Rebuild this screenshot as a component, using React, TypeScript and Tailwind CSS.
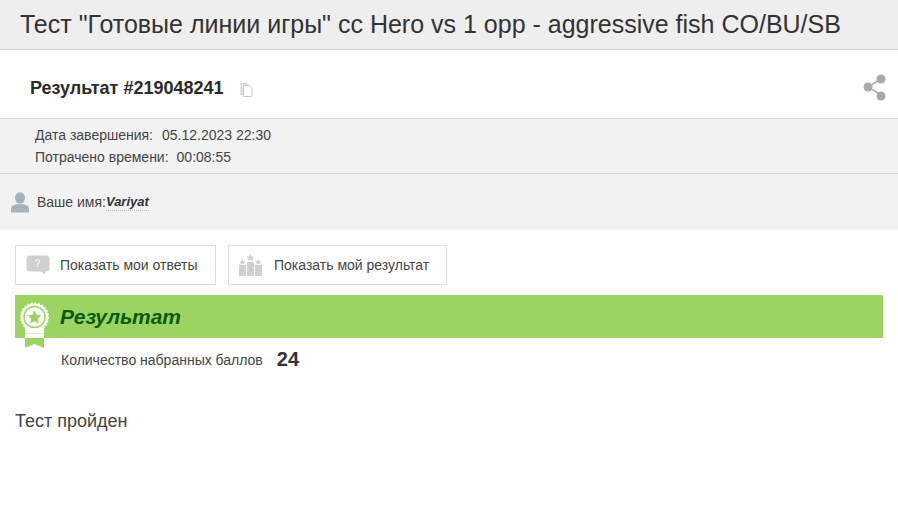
import React from 'react';

const SANS = 'font-["Liberation_Sans",Arial,sans-serif]';

function CopyIcon() {
  return (
    <svg width="13" height="14" viewBox="0 0 13 14" className="block">
      <path d="M1 .5h6l1.500 1.500v.5H4.500v9H1z" fill="#e4e6e8" stroke="#c9ccd0" strokeWidth="1" />
      <path d="M3.500 2.500h5.500l3 3v8h-8.500z" fill="#fff" stroke="#c4c7cb" strokeWidth="1" />
    </svg>
  );
}

function ShareIcon() {
  return (
    <svg width="24" height="28" viewBox="0 0 24 28" className="block">
      <path d="M5 14L18 6M5 14L18 22" stroke="#b0adb0" strokeWidth="1.600" />
      <circle cx="5" cy="14" r="4.500" fill="#aaa8ab" />
      <circle cx="18" cy="6" r="4.500" fill="#aaa8ab" />
      <circle cx="18" cy="23" r="4.500" fill="#aaa8ab" />
    </svg>
  );
}

function UserIcon() {
  return (
    <svg width="18" height="21" viewBox="0 0 18 21" className="block">
      <ellipse cx="9" cy="6" rx="5" ry="5.800" fill="#a3b3bd" />
      <path d="M0 20.500v-4c0-2.500 3-3.800 5.500-4.300h7c2.500.5 5.500 1.800 5.500 4.300v4z" fill="#a3b3bd" />
    </svg>
  );
}

function QuestionIcon() {
  return (
    <svg width="24" height="20" viewBox="0 0 24 20" className="block">
      <path d="M4 .5h16a3.500 3.500 0 0 1 3.500 3.500v9a3.500 3.500 0 0 1-3.500 3.500h-1v3l-4-3H4A3.500 3.500 0 0 1 .5 13V4A3.500 3.500 0 0 1 4 .5z" fill="#cfcfcf" />
      <text x="11.500" y="12" fontSize="10" fontWeight="700" fill="#f2f2f2" textAnchor="middle" fontFamily="Liberation Sans, sans-serif">?</text>
    </svg>
  );
}

function PodiumIcon() {
  return (
    <svg width="24" height="22" viewBox="0 0 24 22" className="block">
      <rect x="0" y="11" width="7" height="11" fill="#cfcfcf" />
      <rect x="8" y="8" width="7" height="14" fill="#cfcfcf" />
      <rect x="16" y="11" width="7" height="11" fill="#cfcfcf" />
      <polygon points="3.500,5 4.500,7.200 6.800,7.400 5,9 5.600,10.800 3.500,9.800 1.400,10.800 2,9 .2,7.400 2.500,7.200" fill="#cfcfcf" />
      <polygon points="11.500,0 12.700,2.600 15.300,2.800 13.300,4.600 14,7 11.500,5.700 9,7 9.700,4.600 7.700,2.800 10.300,2.600" fill="#cfcfcf" />
      <polygon points="19.500,5 20.500,7.200 22.800,7.400 21,9 21.600,10.800 19.500,9.800 17.400,10.800 18,9 16.200,7.400 18.500,7.200" fill="#cfcfcf" />
    </svg>
  );
}

function Badge() {
  return (
    <svg width="32" height="47" viewBox="0 0 32 47" className="block">
      <path d="M6 37h19v10l-9.500-4-9.500 4z" fill="#9cd461" />
      <rect x="6" y="26" width="19" height="11" fill="#fff" />
      <rect x="6" y="32" width="19" height="1" fill="#dcefc8" />
      <circle cx="15.500" cy="16" r="13.500" fill="#fff" stroke="#fff" strokeWidth="2" strokeDasharray="2 1.500" />
      <circle cx="15.500" cy="16" r="10.500" fill="#fff" stroke="#9cd461" strokeWidth="1.500" />
      <polygon points="15.500,9 17.600,13.700 22.500,14.200 18.800,17.500 19.900,22.500 15.500,19.900 11.100,22.500 12.200,17.500 8.500,14.200 13.400,13.700" fill="#9cd461" />
    </svg>
  );
}

export default function App() {
  return (
    <div className={`${SANS} min-h-[506px] bg-white text-[#333]`}>
      {/* Title */}
      <div className="h-[50px] bg-[#eeeeee] border-b border-[#d6d6d6] pl-5 pb-[2px] flex items-center">
        <h1 className="text-[25px] leading-[46px] font-normal whitespace-nowrap">
          Тест "Готовые линии игры" cc Hero vs 1 opp - aggressive fish CO/BU/SB
        </h1>
      </div>

      {/* Result number */}
      <div className="h-[68px] flex items-center pl-[30px] pr-[11px] pt-[9px]">
        <span className="text-[18px] font-bold text-[#2b2b2b]">Результат #219048241</span>
        <span className="ml-[16px] mt-[2px]"><CopyIcon /></span>
        <span className="ml-auto -mt-[4px]"><ShareIcon /></span>
      </div>

      {/* Details */}
      <div className="bg-[#f2f2f2] border-t border-[#d6d6d6] h-[112px]">
        <div className="h-[55px] pl-[35px] pt-[5px] border-b border-[#d6d6d6] text-[14px] leading-[22px] text-[#444]">
          <div className="flex">
            <span>Дата завершения:</span>
            <span className="ml-[9px]">05.12.2023 22:30</span>
          </div>
          <div className="flex">
            <span>Потрачено времени:</span>
            <span className="ml-[8px]">00:08:55</span>
          </div>
        </div>
        <div className="flex items-center pl-[11px] pt-[1px] h-[55px] text-[14px] text-[#444]">
          <UserIcon />
          <span className="ml-2">Ваше имя:</span>
          <span className="text-[13px] font-bold italic text-[#333] border-b border-dotted border-[#bbb] leading-[16px]">Variyat</span>
        </div>
      </div>

      <div className="px-[15px]">
        {/* Buttons */}
        <div className="flex gap-3 pt-[15px]">
          <div className="w-[201px] h-10 border border-[#dddddd] flex items-center pl-[10px] text-[14px] text-[#444]">
            <QuestionIcon />
            <span className="ml-[10px]">Показать мои ответы</span>
          </div>
          <div className="w-[219px] h-10 border border-[#dddddd] flex items-center pl-[10px] text-[14px] text-[#444]">
            <PodiumIcon />
            <span className="ml-[11px]">Показать мой результат</span>
          </div>
        </div>

        {/* Result banner */}
        <div className="relative mt-[10px] h-[43px] bg-[#9cd461] pl-[45px] flex items-center">
          <span className="absolute left-[4px] top-[6px]"><Badge /></span>
          <span className="text-[21px] font-bold italic text-[#0b5a12]">Результат</span>
        </div>

        <div className="flex items-center pl-[46px] h-[44px] text-[14px] text-[#444]">
          <span>Количество набранных баллов</span>
          <span className="ml-[14px] -mt-[2px] text-[20px] font-bold text-[#333]">24</span>
        </div>

        <p className="mt-[26px] text-[18px] leading-[26px] text-[#444]">Тест пройден</p>
      </div>
    </div>
  );
}
